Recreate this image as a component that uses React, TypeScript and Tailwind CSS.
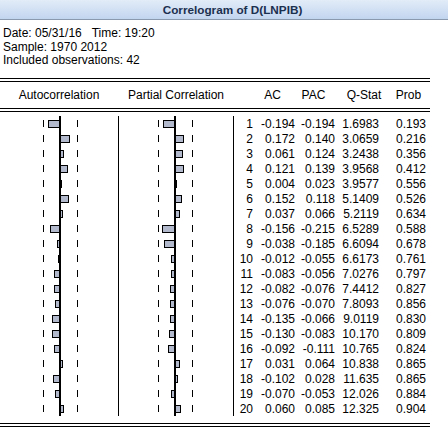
const rows: [number, string, string, string, string][] = [
  [1, '-0.194', '-0.194', '1.6983', '0.193'],
  [2, '0.172', '0.140', '3.0659', '0.216'],
  [3, '0.061', '0.124', '3.2438', '0.356'],
  [4, '0.121', '0.139', '3.9568', '0.412'],
  [5, '0.004', '0.023', '3.9577', '0.556'],
  [6, '0.152', '0.118', '5.1409', '0.526'],
  [7, '0.037', '0.066', '5.2119', '0.634'],
  [8, '-0.156', '-0.215', '6.5289', '0.588'],
  [9, '-0.038', '-0.185', '6.6094', '0.678'],
  [10, '-0.012', '-0.055', '6.6173', '0.761'],
  [11, '-0.083', '-0.056', '7.0276', '0.797'],
  [12, '-0.082', '-0.076', '7.4412', '0.827'],
  [13, '-0.076', '-0.070', '7.8093', '0.856'],
  [14, '-0.135', '-0.066', '9.0119', '0.830'],
  [15, '-0.130', '-0.083', '10.170', '0.809'],
  [16, '-0.092', '-0.111', '10.765', '0.824'],
  [17, '0.031', '0.064', '10.838', '0.865'],
  [18, '-0.102', '0.028', '11.635', '0.865'],
  [19, '-0.070', '-0.053', '12.026', '0.884'],
  [20, '0.060', '0.085', '12.325', '0.904'],
];

// pixels per unit of correlation
const SCALE = 55;

const barLen = (v: number) => Math.max(Math.round(Math.abs(v) * SCALE), 1);

// one correlogram cell: dash, negative half, axis, positive half, dash
function BarCell({ value, wide }: { value: number; wide?: boolean }) {
  const len = barLen(value);
  return (
    <div className={wide ? 'flex h-[15px] w-[118px] shrink-0' : 'flex h-[15px] w-[114px] shrink-0'}>
      <div className={wide ? 'relative w-[59px] shrink-0' : 'relative w-[55px] shrink-0'}>
        <div className={wide ? 'absolute left-[43px] top-[4px] h-[7px] w-px bg-black' : 'absolute left-[39px] top-[4px] h-[7px] w-px bg-black'} />
        {value < 0 && (
          <div
            className="absolute right-0 top-[4px] h-[8px] border border-r-0 border-black bg-[#b3b9cc]"
            style={{ width: len }}
          />
        )}
      </div>
      <div className="w-[2px] h-[15px] shrink-0 bg-black" />
      <div className="relative flex-1">
        <div className="absolute left-[16px] top-[4px] h-[7px] w-px bg-black" />
        {value >= 0 && (
          <div
            className="absolute left-0 top-[4px] h-[8px] border border-l-0 border-black bg-[#b3b9cc]"
            style={{ width: len }}
          />
        )}
      </div>
    </div>
  );
}

function DoubleRule() {
  return (
    <div className="w-[430px]">
      <div className="h-px bg-black" />
      <div className="h-[2px]" />
      <div className="h-px bg-black" />
    </div>
  );
}

export default function App() {
  return (
    <div className="w-[448px] h-[443px] bg-white overflow-hidden text-black font-['Liberation_Sans',Arial,sans-serif]">
      <div className="h-[19px] flex items-center justify-center pl-[17px] bg-linear-to-b from-[#e2ecf8] to-[#c2d5ef]">
        <span className="text-[11.75px] font-bold text-[#1b2f4f] leading-none">Correlogram of D(LNPIB)</span>
      </div>
      <div className="h-px bg-[#8a99ae]" />

      <div className="h-[58px] pt-[7px] pl-[3px] text-[12px] leading-[13.5px]">
        <div>Date: 05/31/16&nbsp;&nbsp;&nbsp;Time: 19:20</div>
        <div>Sample: 1970 2012</div>
        <div>Included observations: 42</div>
      </div>

      <DoubleRule />
      <div className="h-[26px] flex items-center text-[12px]">
        <div className="w-[118px] text-center">Autocorrelation</div>
        <div className="w-px" />
        <div className="w-[114px] text-center">Partial Correlation</div>
        <div className="w-px" />
        <div className="w-[20px]" />
        <div className="w-[37px] text-center">AC</div>
        <div className="w-[45px] text-center">PAC</div>
        <div className="w-[56px] text-center">Q-Stat</div>
        <div className="w-[33px] text-center">Prob</div>
      </div>
      <DoubleRule />

      <div className="mt-[4px]">
        {rows.map(([n, ac, pac, q, p]) => (
          <div key={n} className="h-[15px] flex text-[12px] leading-[15px]">
            <BarCell value={parseFloat(ac)} wide />
            <div className="w-px h-[15px] bg-black" />
            <BarCell value={parseFloat(pac)} />
            <div className="w-px h-[15px] bg-black" />
            <div className="flex pt-px">
              <div className="w-[19px] text-right">{n}</div>
              <div className="w-[42px] text-right">{ac}</div>
              <div className="w-[40px] text-right">{pac}</div>
              <div className="w-[44px] text-right">{q}</div>
              <div className="w-[47px] text-right">{p}</div>
            </div>
          </div>
        ))}
      </div>

      <div className="mt-[7px]">
        <DoubleRule />
      </div>
    </div>
  );
}
